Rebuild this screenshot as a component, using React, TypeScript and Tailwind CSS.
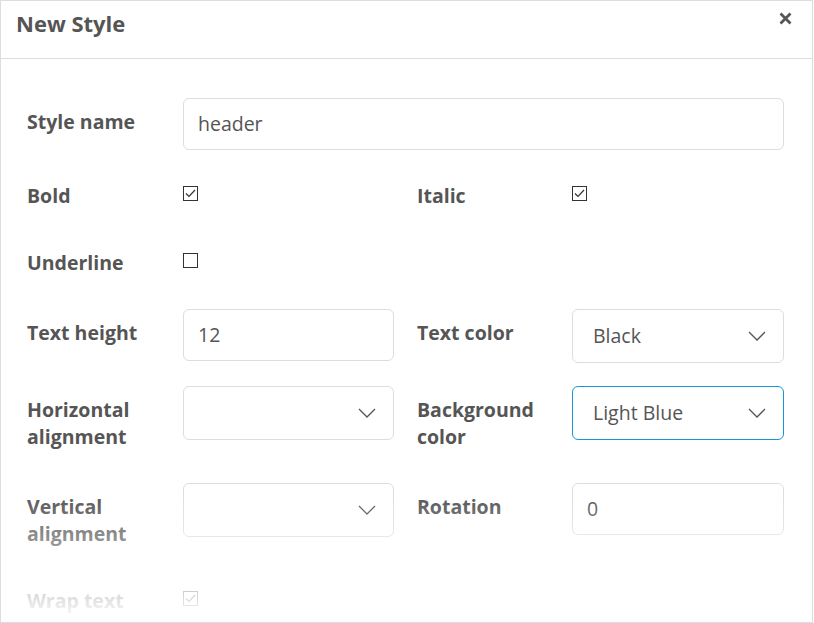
function Check({ checked, faded }: { checked: boolean; faded?: boolean }) {
  return (
    <div
      className={`w-[15px] h-[15px] border flex items-center justify-center ${
        faded ? "border-[#ccc]" : "border-[#333]"
      }`}
    >
      {checked && (
        <svg width="11" height="9" viewBox="0 0 11 9" fill="none">
          <path d="M1 4.5 L4 7.5 L10 1" stroke={faded ? "#ccc" : "#333"} strokeWidth="1.2" />
        </svg>
      )}
    </div>
  )
}

function Chevron() {
  return (
    <svg width="18" height="10" viewBox="0 0 18 10" fill="none">
      <path d="M1 1 L9 9 L17 1" stroke="#555" strokeWidth="1.3" />
    </svg>
  )
}

function TextField({ value }: { value: string }) {
  return (
    <div className="h-[52px] w-full border border-[#ddd] rounded-[6px] flex items-center px-[14px] text-[19.5px] text-[#555]">
      {value}
    </div>
  )
}

function SelectField({ value, focused }: { value: string; focused?: boolean }) {
  return (
    <div
      className={`h-[54px] w-full border rounded-[6px] flex items-center justify-between pl-[20px] pr-[17px] text-[19.5px] text-[#555] ${
        focused ? "border-[#1597d5]" : "border-[#ddd]"
      }`}
    >
      <span>{value}</span>
      <Chevron />
    </div>
  )
}

function Label({ children, right }: { children: React.ReactNode; right?: boolean }) {
  return (
    <div
      className={`${right ? "w-[155px]" : "w-[156px]"} shrink-0 pt-[10px] text-[19.5px] leading-[27px] font-bold text-[#555]`}
    >
      {children}
    </div>
  )
}

export default function App() {
  return (
    <div
      className="relative w-[813px] h-[623px] overflow-hidden border border-[#ddd] bg-white"
      style={{ fontFamily: '"Open Sans", "Liberation Sans", sans-serif' }}
    >
      {/* Header */}
      <div className="h-[58px] border-b border-[#ddd] flex items-start justify-between pl-[15px] pr-[20px] pt-[7px]">
        <h1 className="text-[22px] leading-[30px] font-bold text-[#555]">New Style</h1>
        <svg width="13" height="13" viewBox="0 0 13 13" className="mt-[4px]">
          <path d="M1.5 1.5 L11.5 11.5 M11.5 1.5 L1.5 11.5" stroke="#555" strokeWidth="2.8" />
        </svg>
      </div>

      {/* Body */}
      <div className="pl-[26px] pr-[28px] pt-[39px]">
        <div className="flex h-[74px]">
          <Label>Style name</Label>
          <div className="flex-1">
            <TextField value="header" />
          </div>
        </div>

        <div className="grid grid-cols-2 gap-x-[23px]">
          <div className="flex h-[67px]">
            <Label>Bold</Label>
            <div className="pt-[14px]">
              <Check checked />
            </div>
          </div>
          <div className="flex h-[67px]">
            <Label right>Italic</Label>
            <div className="pt-[14px]">
              <Check checked />
            </div>
          </div>

          <div className="flex h-[70px]">
            <Label>Underline</Label>
            <div className="pt-[14px]">
              <Check checked={false} />
            </div>
          </div>
          <div className="h-[70px]" />

          <div className="flex h-[77px]">
            <Label>Text height</Label>
            <div className="flex-1">
              <TextField value="12" />
            </div>
          </div>
          <div className="flex h-[77px]">
            <Label right>Text color</Label>
            <div className="flex-1">
              <SelectField value="Black" />
            </div>
          </div>

          <div className="flex h-[97px]">
            <Label>Horizontal alignment</Label>
            <div className="flex-1">
              <SelectField value="" />
            </div>
          </div>
          <div className="flex h-[97px]">
            <Label right>Background color</Label>
            <div className="flex-1">
              <SelectField value="Light Blue" focused />
            </div>
          </div>

          <div className="flex h-[94px]">
            <Label>Vertical alignment</Label>
            <div className="flex-1">
              <SelectField value="" />
            </div>
          </div>
          <div className="flex h-[94px]">
            <Label right>Rotation</Label>
            <div className="flex-1">
              <TextField value="0" />
            </div>
          </div>

          <div className="flex h-[60px]">
            <Label>Wrap text</Label>
            <div className="pt-[14px]">
              <Check checked />
            </div>
          </div>
        </div>
      </div>

      {/* Scroll fade */}
      <div className="absolute left-0 right-0 bottom-0 h-[128px] bg-gradient-to-b from-white/0 to-white pointer-events-none" />
    </div>
  )
}
